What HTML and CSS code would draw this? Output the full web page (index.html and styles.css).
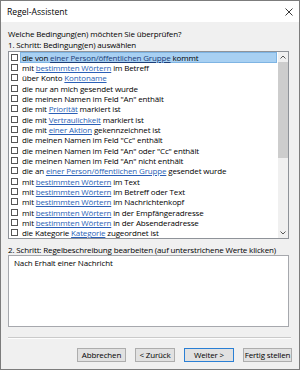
FILE: index.html
```html
<!DOCTYPE html>
<html lang="de">
  <head>
    <meta charset="UTF-8" />
    <title>Regel-Assistent</title>
    <link rel="stylesheet" href="styles.css">
  </head>
  <body>
    <div class="window">
      <header class="titlebar">
        <span class="title">Regel-Assistent</span>
        <svg class="close" width="8" height="8" viewBox="0 0 8 8">
          <path d="M0.5 0.5 L7.5 7.5 M7.5 0.5 L0.5 7.5" stroke="#222" stroke-width="0.9" fill="none" />
        </svg>
      </header>

      <div class="content">
        <p class="line">Welche Bedingung(en) möchten Sie überprüfen?</p>
        <p class="line">1. Schritt: Bedingung(en) auswählen</p>

        <div class="listbox">
          <ul class="conds">
            <li><span class="box"></span><span class="label selected">die von <a>einer Person/öffentlichen Gruppe</a> kommt</span></li>
            <li><span class="box"></span><span class="label">mit <a>bestimmten Wörtern</a> im Betreff</span></li>
            <li><span class="box"></span><span class="label">über Konto <a>Kontoname</a></span></li>
            <li><span class="box"></span><span class="label">die nur an mich gesendet wurde</span></li>
            <li><span class="box"></span><span class="label">die meinen Namen im Feld "An" enthält</span></li>
            <li><span class="box"></span><span class="label">die mit <a>Priorität</a> markiert ist</span></li>
            <li><span class="box"></span><span class="label">die mit <a>Vertraulichkeit</a> markiert ist</span></li>
            <li><span class="box"></span><span class="label">die mit <a>einer Aktion</a> gekennzeichnet ist</span></li>
            <li><span class="box"></span><span class="label">die meinen Namen im Feld "Cc" enthält</span></li>
            <li><span class="box"></span><span class="label">die meinen Namen im Feld "An" oder "Cc" enthält</span></li>
            <li><span class="box"></span><span class="label">die meinen Namen im Feld "An" nicht enthält</span></li>
            <li><span class="box"></span><span class="label">die an <a>einer Person/öffentlichen Gruppe</a> gesendet wurde</span></li>
            <li><span class="box"></span><span class="label">mit <a>bestimmten Wörtern</a> im Text</span></li>
            <li><span class="box"></span><span class="label">mit <a>bestimmten Wörtern</a> im Betreff oder Text</span></li>
            <li><span class="box"></span><span class="label">mit <a>bestimmten Wörtern</a> im Nachrichtenkopf</span></li>
            <li><span class="box"></span><span class="label">mit <a>bestimmten Wörtern</a> in der Empfängeradresse</span></li>
            <li><span class="box"></span><span class="label">mit <a>bestimmten Wörtern</a> in der Absenderadresse</span></li>
            <li><span class="box"></span><span class="label">die Kategorie <a>Kategorie</a> zugeordnet ist</span></li>
          </ul>
          <div class="scrollbar">
            <div class="arrow">
              <svg width="6" height="4" viewBox="0 0 6 4"><path d="M0.5 3.5 L3 1 L5.5 3.5" stroke="#555" stroke-width="1" fill="none" /></svg>
            </div>
            <div class="track"><div class="thumb"></div></div>
            <div class="arrow">
              <svg width="6" height="4" viewBox="0 0 6 4"><path d="M0.5 0.5 L3 3 L5.5 0.5" stroke="#555" stroke-width="1" fill="none" /></svg>
            </div>
          </div>
        </div>

        <p class="line step2">2. Schritt: Regelbeschreibung bearbeiten (auf unterstrichene Werte klicken)</p>
        <div class="desc">Nach Erhalt einer Nachricht</div>

        <div class="separator"></div>

        <div class="buttons">
          <button class="btn cancel">Abbrechen</button>
          <button class="btn back">&lt; Zurück</button>
          <button class="btn next default">Weiter &gt;</button>
          <button class="btn finish">Fertig stellen</button>
        </div>
      </div>
    </div>
  </body>
</html>
```

FILE: styles.css
```css
body {
  margin: 0;
  font-family: "Open Sans", "Noto Sans", sans-serif;
  font-size: 8px;
  letter-spacing: -0.15px;
  color: #000;
}
.window {
  width: 300px;
  height: 370px;
  box-sizing: border-box;
  border: 1px solid #7c7c7c;
  background: #f0f0f0;
  display: flex;
  flex-direction: column;
}
.titlebar {
  height: 21px;
  background: #fff;
  display: flex;
  align-items: center;
  justify-content: space-between;
  padding: 0 6px 0 6px;
}
.title {
  font-size: 8.6px;
  letter-spacing: 0;
}
.content {
  flex: 1;
  display: flex;
  flex-direction: column;
  padding: 6px 7px 0 7px;
}
.line {
  margin: 0;
  line-height: 11px;
  white-space: nowrap;
}
.listbox {
  margin-top: 1px;
  margin-right: 3px;
  height: 188px;
  box-sizing: border-box;
  border: 1px solid #8f9399;
  background: #fff;
  display: flex;
}
.conds {
  flex: 1;
  list-style: none;
  margin: 0;
  padding: 0;
}
.conds li {
  height: 10.33px;
  display: flex;
  align-items: center;
  white-space: nowrap;
}
.box {
  width: 7px;
  height: 7px;
  box-sizing: border-box;
  border: 1px solid #555;
  background: #fff;
  margin: 0 2px 0 2px;
  flex: none;
}
.label {
  padding: 0 2px;
  line-height: 9px;
}
.label.selected {
  flex: 1;
  margin-right: 1px;
  background: #a8d0f2;
  border: 1px solid #7eb4e3;
  padding: 0 1px;
}
.label a {
  color: #2a5fb6;
  text-decoration: underline;
}
.label.selected a {
  color: #1b3d78;
}
/* scrollbar */
.scrollbar {
  width: 10px;
  display: flex;
  flex-direction: column;
  background: #f0f0f0;
}
.arrow {
  height: 10px;
  display: flex;
  align-items: center;
  justify-content: center;
}
.track {
  flex: 1;
}
.thumb {
  height: 96px;
  background: #cdcdcd;
}
.step2 {
  margin-top: 4.5px;
}
.desc {
  margin-top: 0.5px;
  margin-right: 3px;
  height: 72px;
  box-sizing: border-box;
  border: 1px solid #a6a8ad;
  background: #fff;
  padding: 1px 5px;
  line-height: 11px;
}
.separator {
  margin-top: 10px;
  margin-right: 1px;
  border-top: 1px solid #cacaca;
  border-bottom: 1px solid #fdfdfd;
}
.buttons {
  margin-top: 9px;
  display: flex;
  justify-content: flex-end;
  gap: 9px;
}
.btn {
  height: 14px;
  box-sizing: border-box;
  padding: 0;
  font-family: inherit;
  font-size: 8px;
  letter-spacing: -0.15px;
  white-space: nowrap;
  color: #000;
  background: #e1e1e1;
  border: 1px solid #adadad;
  line-height: 12px;
}
.cancel {
  width: 49px;
}
.back {
  width: 40px;
}
.next {
  width: 50px;
}
.finish {
  width: 49px;
}
.default {
  border-color: #2a7fd4;
}
```
